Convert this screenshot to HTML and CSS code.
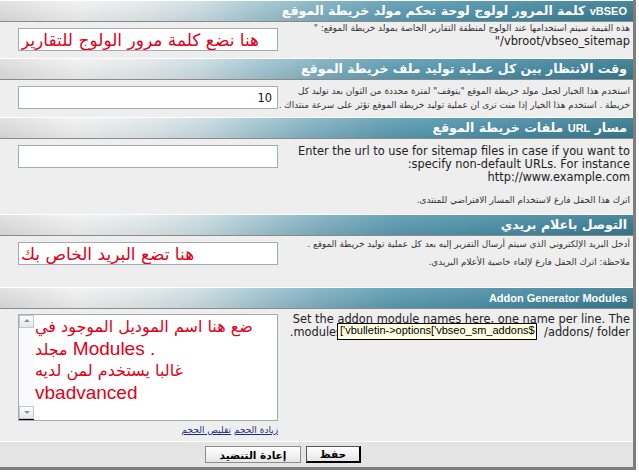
FILE: index.html
```html
<!DOCTYPE html>
<html dir="rtl" lang="ar">
    <head>
        <meta charset="utf-8" />
        <title>vBSEO Sitemap Generator</title>
        <meta name="viewport" content="width=device-width, initial-scale=1.0" />
        <link rel="stylesheet" href="styles.css">
    </head>

    <body>
        <form class="panel">
            <div class="head"><span class="lat">vBSEO</span> كلمة المرور لولوج لوحة تحكم مولد خريطة الموقع</div>
            <div class="row row-pass">
                <div class="desc">
                    <div class="ar">هذه القيمة سيتم استخدامها عند الولوج لمنطقة التقارير الخاصة بمولد خريطة الموقع: "</div>
                    <div><span dir="ltr">/vbroot/vbseo_sitemap</span>"</div>
                </div>
                <div class="field">
                    <input class="text red" dir="ltr" value="هنا نضع كلمة مرور الولوج للتقارير" />
                </div>
            </div>

            <div class="head">وقت الانتظار بين كل عملية توليد ملف خريطة الموقع</div>
            <div class="row row-wait">
                <div class="desc ar nowrap">
                    <div>استخدم هذا الخيار لجعل مولد خريطة الموقع "يتوقف" لفترة محددة من الثوان بعد توليد كل</div>
                    <div>خريطة . استخدم هذا الخيار إذا منت ترى ان عملية توليد خريطة الموقع تؤثر على سرعة منتداك .</div>
                </div>
                <div class="field">
                    <input class="text" value="10" />
                </div>
            </div>

            <div class="head">مسار <span class="lat">URL</span> ملفات خريطة الموقع</div>
            <div class="row row-url">
                <div class="desc">
                    <div class="nowrap">Enter the url to use for sitemap files in case if you want to</div>
                    <div class="nowrap"><span dir="ltr">:specify non-default URLs. For instance</span></div>
                    <div>http://www.example.com</div>
                    <div class="ar note">اترك هذا الحقل فارغ لاستخدام المسار الافتراضي للمنتدى.</div>
                </div>
                <div class="field">
                    <input class="text" value="" />
                </div>
            </div>

            <div class="head">التوصل باعلام بريدي</div>
            <div class="row row-mail">
                <div class="desc ar">
                    <div class="nowrap">أدخل البريد الإلكتروني الذي سيتم أرسال التقرير إليه بعد كل عملية توليد خريطة الموقع .</div>
                    <div class="note">ملاحظة: اترك الحقل فارغ لإلغاء خاصية الأعلام البريدي.</div>
                </div>
                <div class="field">
                    <input class="text red" dir="ltr" value="هنا تضع البريد الخاص بك" />
                </div>
            </div>

            <div class="head"><span class="lat">Addon Generator Modules</span></div>
            <div class="row row-addon">
                <div class="desc">
                    <div class="nowrap">Set the addon module names here, one name per line. The</div>
                    <div class="modline">
                        <span dir="ltr">/addons/ folder</span>
                        <span class="gap"></span>
                        <span dir="ltr">.modules</span>
                    </div>
                    <div class="tip" dir="ltr">['vbulletin-&gt;options['vbseo_sm_addons$</div>
                </div>
                <div class="field">
                    <div class="textbox">
                        <div class="scroll">
                            <span class="arrow up"></span>
                            <span class="arrow down"></span>
                        </div>
                        <div class="lines">
                            <div class="arl">ضع هنا اسم الموديل الموجود في</div>
                            <div><span class="arl">مجلد</span> Modules .</div>
                            <div class="arl">غالبا يستخدم لمن لديه</div>
                            <div>vbadvanced</div>
                        </div>
                    </div>
                    <div class="resize">
                        <a href="#">زيادة الحجم</a>
                        <a href="#">تقليص الحجم</a>
                    </div>
                </div>
            </div>

            <div class="foot">
                <button type="button" class="btn save">حفظ</button>
                <button type="reset" class="btn reset">إعادة التنضيد</button>
            </div>
        </form>
    </body>
</html>
```

FILE: styles.css
```css
body {
    margin: 0;
    background: #fff;
    color: #222;
    font-family: "DejaVu Sans", sans-serif;
    font-size: 11.4px;
}

.panel {
    width: 633px;
    margin-right: auto;
    background: #eeeeee;
    border-right: 3px solid #7d7d7d;
    border-bottom: 3px solid #7d7d7d;
}

.head {
    height: 20px;
    padding-right: 6px;
    border-top: 1px solid #fff;
    border-bottom: 1px solid #8a8a8a;
    color: #fff;
    font: bold 12.5px "DejaVu Sans", sans-serif;
    line-height: 20px;
    white-space: nowrap;
    background:
        linear-gradient(rgba(255, 255, 255, 0.1), rgba(0, 0, 0, 0.06)),
        linear-gradient(to right, #dedede, #f1f1f1 12%, #e2e9eb 23%, #c9dce2 32%, #a6c8d3 40%, #7fb0c1 50%, #5b9bb1 62%, #4a8ea6 78%, #36798f);
}

.head .lat {
    font: bold 11px "Liberation Sans", sans-serif;
}

.row {
    display: grid;
    grid-template-columns: 344px 289px;
}

.row-pass { height: 36px; }
.row-wait { height: 37px; }
.row-url { height: 75px; }
.row-mail { height: 51px; }
.row-addon { height: 132px; }

.desc {
    position: relative;
    padding-right: 3px;
    line-height: 13px;
}

.row-wait .desc {
    padding-top: 4px;
    line-height: 14px;
}

.row-url .desc {
    padding-top: 6px;
}

.row-mail .desc {
    padding-top: 2px;
}

.row-addon .desc {
    padding-top: 4px;
}

.ar {
    font-size: 8.9px;
    color: #333;
}

.nowrap {
    white-space: nowrap;
}

.note {
    margin-top: 10px;
}

.row-mail .note {
    margin-top: 5px;
}

.field {
    padding: 6px 11px 0 0;
}

.row-addon .field {
    padding-top: 5px;
}

.text {
    box-sizing: border-box;
    display: block;
    width: 260px;
    height: 23px;
    margin: 0;
    padding: 0 5px;
    border: 1px solid #a3abb3;
    background: #fff;
    color: #111;
    font: 11.4px "DejaVu Sans", sans-serif;
}

.text.red {
    padding: 0 2px;
    color: #e2001a;
    font-size: 17px;
    text-align: left;
}

.modline {
    display: flex;
    white-space: nowrap;
}

.modline .gap {
    width: 202px;
    flex: none;
}

.tip {
    position: absolute;
    left: 48px;
    top: 14px;
    box-sizing: border-box;
    width: 200px;
    height: 17px;
    line-height: 15px;
    padding-left: 2px;
    border: 1px solid #000;
    background: #ffffe1;
    color: #000;
    font: 11px "Liberation Sans", sans-serif;
    white-space: nowrap;
    overflow: hidden;
}

.textbox {
    box-sizing: border-box;
    display: flex;
    direction: ltr;
    width: 260px;
    height: 107px;
    border: 1px solid #a3abb3;
    background: #fff;
}

.scroll {
    display: flex;
    flex-direction: column;
    justify-content: space-between;
    width: 15px;
    flex: none;
    background: #fafafa;
    border-bottom: 1px solid #000;
}

.arrow {
    position: relative;
    height: 11px;
    border: 1px solid #c4c8cc;
    background: linear-gradient(#fdfdfd, #e4e6e8);
}

.arrow::after {
    content: "";
    position: absolute;
    left: 4px;
    top: 3px;
    border-left: 3px solid transparent;
    border-right: 3px solid transparent;
}

.arrow.up::after {
    border-bottom: 3px solid #8a9096;
}

.arrow.down::after {
    top: 4px;
    border-top: 3px solid #8a9096;
}

.lines {
    padding: 2px 0 0 1px;
    color: #e2001a;
    font: 19px "Liberation Sans", sans-serif;
    line-height: 25px;
    white-space: nowrap;
    overflow: hidden;
}

.arl {
    font: 16px "DejaVu Sans", sans-serif;
}

.resize {
    margin-top: 3px;
    line-height: 12px;
    font-size: 9px;
}

.resize a {
    color: #1d2f7c;
}

.foot {
    display: flex;
    gap: 5px;
    height: 21px;
    padding: 4px 272px 0 0;
    border-top: 1px solid #fff;
    background: #e4e4e4;
}

.btn {
    height: 17px;
    margin: 0;
    padding: 0;
    border: 1px solid #8d8d8d;
    background: linear-gradient(#ffffff, #e6e6e6);
    color: #000;
    font: bold 10.5px "DejaVu Sans", sans-serif;
}

.btn.save {
    width: 55px;
    border-color: #555;
    border-right: 2px solid #000;
    border-bottom: 2px solid #000;
}

.btn.reset {
    width: 96px;
}
```
